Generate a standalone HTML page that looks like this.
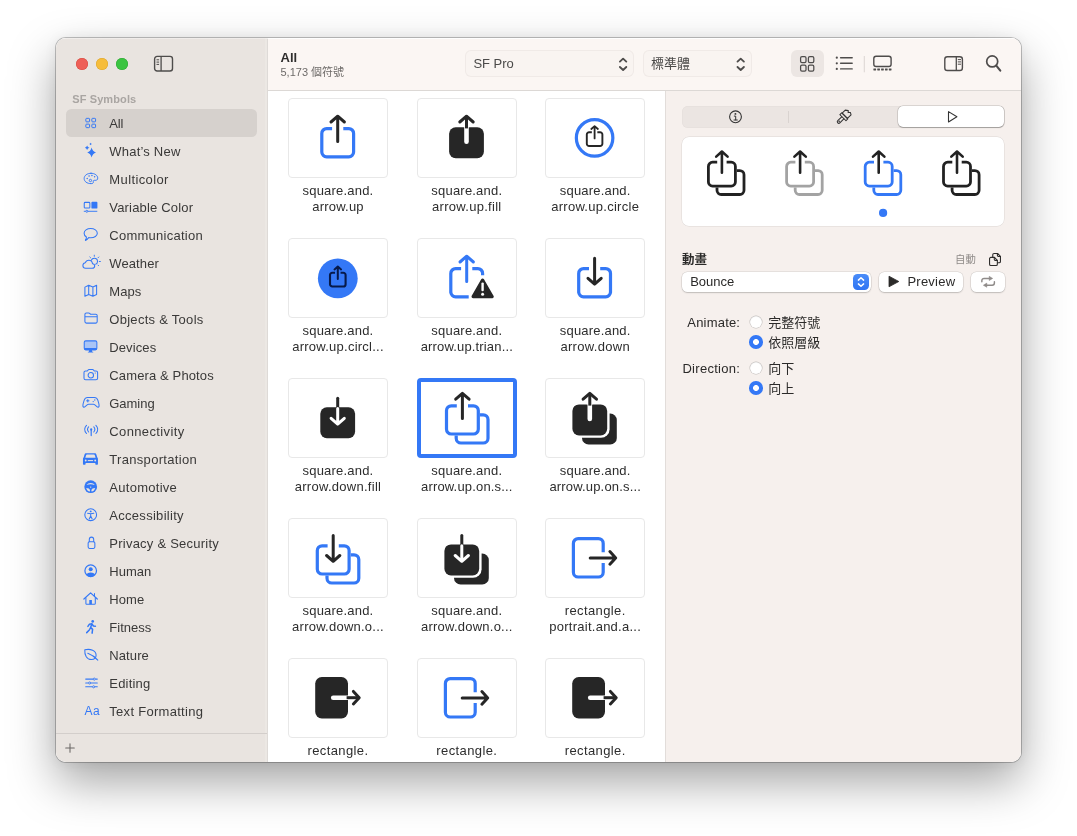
<!DOCTYPE html>
<html lang="zh-Hant">
<head>
<meta charset="utf-8">
<title>SF Symbols</title>
<style>
*{box-sizing:border-box;margin:0;padding:0}
html,body{width:1077px;height:836px;overflow:hidden;background:#fff}
body{font-family:"Liberation Sans","Noto Sans CJK TC",sans-serif;font-size:13px;color:#2b2b2b;position:relative}
.abs{position:absolute}
.win{will-change:transform}
svg{overflow:visible}
.shadow{position:absolute;left:56px;top:38px;width:965px;height:724px;border-radius:10px;
 box-shadow:0 0 0 1px rgba(0,0,0,.23),0 20px 47px rgba(0,0,0,.36),0 0 14px rgba(0,0,0,.06)}
.win{position:absolute;left:56px;top:38px;width:965px;height:724px;border-radius:10px;overflow:hidden;background:#fff}
.sidebar{position:absolute;left:0;top:0;width:212px;height:724px;background:#e9e4e0}
.sidebar .edge{position:absolute;right:0;top:0;width:3.3px;height:100%;background:#ece8e4;border-right:1px solid #dedad7}
.tl{position:absolute;top:20px;width:12px;height:12px;border-radius:50%}
.sec{position:absolute;left:16.3px;top:53.6px;font-size:11px;font-weight:bold;color:#a9a5a2;line-height:14px;letter-spacing:.1px}
.selrow{position:absolute;left:10px;top:71px;width:191px;height:28px;border-radius:5.5px;background:#d6d1cd}
.sfoot{position:absolute;left:0;top:695px;width:211px;height:1px;background:#d3cecb}
.toolbar{position:absolute;left:212px;top:0;width:753px;height:52.6px;background:#fbf6f3;border-bottom:1px solid #dcd8d5}
.hl{position:absolute;left:0;top:0;width:965px;height:1px;background:linear-gradient(90deg,rgba(255,255,255,.35) 0 211px,rgba(255,255,255,.9) 212px)}
.card{position:absolute;width:100px;height:80px;border:1px solid #e8e8e8;border-radius:4px;background:#fff}
.sel-card{border:4px solid #3478f6;border-radius:4px}
.lbl{position:absolute;width:128px;text-align:center;font-size:13px;line-height:16px;color:#2d2d2d;letter-spacing:.24px;white-space:nowrap}
.popup{border-radius:6px;background:#f9f4f1;box-shadow:inset 0 0 0 1px #f0eae7}
.grid{position:absolute;left:211px;top:52px;width:398px;height:672px}
</style>
</head>
<body>
<div class="shadow"></div>
<div class="win">
  <div class="sidebar">
    <div class="edge"></div>
    <div class="tl" style="left:20px;background:#ee5f57;box-shadow:inset 0 0 0 .5px #d5493f"></div>
    <div class="tl" style="left:40px;background:#f6bd3b;box-shadow:inset 0 0 0 .5px #dba42c"></div>
    <div class="tl" style="left:60px;background:#3bc441;box-shadow:inset 0 0 0 .5px #2ea533"></div>
    <div class="sec">SF Symbols</div>
    <div class="selrow"></div>
    <div class="sfoot"></div>
  </div>
  <div class="toolbar"></div>
<div class="abs" style="left:53.3px;top:78.0px;font-size:13px;line-height:16px;color:#3a3938;font-weight:normal;white-space:nowrap;letter-spacing:-0.14px">All</div>
<svg class="abs" style="left:25.2px;top:75.0px" width="20" height="20" viewBox="0 0 20 20"><rect x="4.85" y="5.35" width="3.7" height="3.5" rx="0.75" fill="none" stroke="#3478f6" stroke-width="1.0"/><rect x="4.85" y="11.15" width="3.7" height="3.5" rx="0.75" fill="none" stroke="#3478f6" stroke-width="1.0"/><rect x="10.85" y="5.35" width="3.7" height="3.5" rx="0.75" fill="none" stroke="#3478f6" stroke-width="1.0"/><rect x="10.85" y="11.15" width="3.7" height="3.5" rx="0.75" fill="none" stroke="#3478f6" stroke-width="1.0"/></svg>
<div class="abs" style="left:53.3px;top:106.0px;font-size:13px;line-height:16px;color:#3a3938;font-weight:normal;white-space:nowrap;letter-spacing:0.21px">What’s New</div>
<svg class="abs" style="left:25.2px;top:103.0px" width="20" height="20" viewBox="0 0 20 20"><path d="M10.6 6.6Q11.568 10.422 15.0 11.5Q11.568 12.578 10.6 16.4Q9.632 12.578 6.199999999999999 11.5Q9.632 10.422 10.6 6.6Z" fill="#3478f6" /><path d="M6.1 4.4Q6.675 6.125 8.399999999999999 6.7Q6.675 7.275 6.1 9.0Q5.5249999999999995 7.275 3.8 6.7Q5.5249999999999995 6.125 6.1 4.4Z" fill="#3478f6" /><path d="M9.6 1.7Q9.99 2.61 10.9 3.0Q9.99 3.39 9.6 4.3Q9.209999999999999 3.39 8.299999999999999 3.0Q9.209999999999999 2.61 9.6 1.7Z" fill="#3478f6" /></svg>
<div class="abs" style="left:53.3px;top:134.0px;font-size:13px;line-height:16px;color:#3a3938;font-weight:normal;white-space:nowrap;letter-spacing:0.39px">Multicolor</div>
<svg class="abs" style="left:25.2px;top:131.0px" width="20" height="20" viewBox="0 0 20 20"><g transform="translate(10 9.5) scale(.95) translate(-10.2 -9.5)"><path d="M10.2 4C14.4 4 17.3 6.4 17.3 9.1C17.3 11.2 15.6 11.6 14.2 11.4C13 11.2 12.3 12 12.6 13C12.9 14 12.3 14.9 10.4 14.9C5.9 14.9 3 12.6 3 9.5C3 6.4 6 4 10.2 4Z" fill="none" stroke="#3478f6" stroke-width="1.05" stroke-linecap="round" stroke-linejoin="round" /><circle cx="6.2" cy="9.4" r="0.8" fill="#3478f6"/><circle cx="8.2" cy="6.9" r="0.8" fill="#3478f6"/><circle cx="11.2" cy="6.4" r="0.8" fill="#3478f6"/><circle cx="14" cy="7.6" r="0.8" fill="#3478f6"/><circle cx="9.6" cy="11.6" r="1.25" fill="none" stroke="#3478f6" stroke-width="1.0"/></g></svg>
<div class="abs" style="left:53.3px;top:162.0px;font-size:13px;line-height:16px;color:#3a3938;font-weight:normal;white-space:nowrap;letter-spacing:0.18px">Variable Color</div>
<svg class="abs" style="left:25.2px;top:159.0px" width="20" height="20" viewBox="0 0 20 20"><rect x="3.25" y="5.35" width="5.6" height="5.7" rx="0.9" fill="none" stroke="#3478f6" stroke-width="1.05"/><rect x="10.4" y="4.8" width="6.0" height="6.8" rx="0.9" fill="#3478f6" /><path d="M3.2 14.3H15.9" fill="none" stroke="#3478f6" stroke-width="0.95" stroke-linecap="round" stroke-linejoin="round" /><circle cx="5.8" cy="14.3" r="1.15" fill="#e9e4e0"/><circle cx="5.8" cy="14.3" r="1.0" fill="none" stroke="#3478f6" stroke-width="0.9"/></svg>
<div class="abs" style="left:53.3px;top:190.0px;font-size:13px;line-height:16px;color:#3a3938;font-weight:normal;white-space:nowrap;letter-spacing:0.25px">Communication</div>
<svg class="abs" style="left:25.2px;top:187.0px" width="20" height="20" viewBox="0 0 20 20"><path d="M9.7 3.5C13.4 3.5 16.3 5.6 16.3 8.2C16.3 10.8 13.4 12.8 9.7 12.8C9 12.8 8.3 12.7 7.7 12.6C6.9 13.6 5.7 14.9 4.4 15.4C4.9 14.5 5.5 13.2 5.4 12C4 11.1 3.1 9.7 3.1 8.2C3.1 5.6 6 3.5 9.7 3.5Z" fill="none" stroke="#3478f6" stroke-width="1.05" stroke-linecap="round" stroke-linejoin="round" /></svg>
<div class="abs" style="left:53.3px;top:218.0px;font-size:13px;line-height:16px;color:#3a3938;font-weight:normal;white-space:nowrap;letter-spacing:0.11px">Weather</div>
<svg class="abs" style="left:25.2px;top:215.0px" width="20" height="20" viewBox="0 0 20 20"><path d="M4.6 15.3H11.2C12.6 15.3 13.7 14.3 13.7 13C13.7 11.7 12.7 10.8 11.5 10.7C11.3 8.6 9.7 7.2 7.8 7.2C6.2 7.2 4.9 8.2 4.4 9.7C2.9 9.8 1.9 11 1.9 12.5C1.9 14.1 3.1 15.3 4.6 15.3Z" fill="none" stroke="#3478f6" stroke-width="1.05" stroke-linecap="round" stroke-linejoin="round" /><path d="M10.3 7.3C10.8 6 12 5.3 13.3 5.3C15.1 5.3 16.5 6.7 16.5 8.5C16.5 9.8 15.8 10.8 14.7 11.3" fill="none" stroke="#3478f6" stroke-width="1.05" stroke-linecap="round" stroke-linejoin="round" /><path d="M13.3 2.2V3.3M17.8 4L17 4.8M19.4 8.5H18.3M8.8 4L9.6 4.8M17.6 12.7L17 12.1" fill="none" stroke="#3478f6" stroke-width="0.95" stroke-linecap="round" stroke-linejoin="round" /></svg>
<div class="abs" style="left:53.3px;top:246.0px;font-size:13px;line-height:16px;color:#3a3938;font-weight:normal;white-space:nowrap;letter-spacing:0.03px">Maps</div>
<svg class="abs" style="left:25.2px;top:243.0px" width="20" height="20" viewBox="0 0 20 20"><path d="M3.9 6.1L7.7 4.2L11.9 6L15.6 4.2V13.6L11.9 15.2L7.7 13.5L3.9 15.2ZM7.7 4.2V13.5M11.9 6V15.2" fill="none" stroke="#3478f6" stroke-width="1.05" stroke-linecap="round" stroke-linejoin="round" /></svg>
<div class="abs" style="left:53.3px;top:274.0px;font-size:13px;line-height:16px;color:#3a3938;font-weight:normal;white-space:nowrap;letter-spacing:0.28px">Objects &amp; Tools</div>
<svg class="abs" style="left:25.2px;top:271.0px" width="20" height="20" viewBox="0 0 20 20"><path d="M3.9 5.4A1.5 1.5 0 0 1 5.4 3.9H7.6C8.3 3.9 8.6 4.2 9 4.7L9.5 5.3H14.7A1.5 1.5 0 0 1 16.2 6.8V12.6A1.5 1.5 0 0 1 14.7 14.1H5.4A1.5 1.5 0 0 1 3.9 12.6ZM3.9 7.7H16.2" fill="none" stroke="#3478f6" stroke-width="1.05" stroke-linecap="round" stroke-linejoin="round" /></svg>
<div class="abs" style="left:53.3px;top:302.0px;font-size:13px;line-height:16px;color:#3a3938;font-weight:normal;white-space:nowrap;letter-spacing:0.1px">Devices</div>
<svg class="abs" style="left:25.2px;top:299.0px" width="20" height="20" viewBox="0 0 20 20"><rect x="3.25" y="3.85" width="12.6" height="9.0" rx="1.5" fill="#a9c4f6" stroke="#3478f6" stroke-width="1.05"/><path d="M3.25 10.9H15.85V11.6A1.5 1.5 0 0 1 14.35 13.1H4.75A1.5 1.5 0 0 1 3.25 11.6Z" fill="#3478f6" /><path d="M8.2 13H10.9L11.2 14.7H12.2V15.5H6.9V14.7H7.9Z" fill="#3478f6" /></svg>
<div class="abs" style="left:53.3px;top:330.0px;font-size:13px;line-height:16px;color:#3a3938;font-weight:normal;white-space:nowrap;letter-spacing:0.13px">Camera &amp; Photos</div>
<svg class="abs" style="left:25.2px;top:327.0px" width="20" height="20" viewBox="0 0 20 20"><path d="M4.6 6H6.3L7.2 4.9C7.4 4.6 7.7 4.5 8 4.5H11.6C11.9 4.5 12.2 4.6 12.4 4.9L13.3 6H15A1.6 1.6 0 0 1 16.6 7.6V13.2A1.6 1.6 0 0 1 15 14.8H4.6A1.6 1.6 0 0 1 3 13.2V7.6A1.6 1.6 0 0 1 4.6 6Z" fill="none" stroke="#3478f6" stroke-width="1.05" stroke-linecap="round" stroke-linejoin="round" /><circle cx="9.8" cy="10.2" r="2.7" fill="none" stroke="#3478f6" stroke-width="1.05"/><circle cx="14.3" cy="8" r="0.6" fill="#3478f6"/></svg>
<div class="abs" style="left:53.3px;top:358.0px;font-size:13px;line-height:16px;color:#3a3938;font-weight:normal;white-space:nowrap;letter-spacing:-0.04px">Gaming</div>
<svg class="abs" style="left:25.2px;top:355.0px" width="20" height="20" viewBox="0 0 20 20"><path d="M6.6 4.4H13.4C15.2 4.4 16.2 5.4 16.8 7.2C17.5 9.3 18.2 11.6 18.1 12.9C18 14 17.2 14.4 16.5 14.1C15.7 13.8 14.6 12.4 13.6 11.6C13.2 11.3 12.8 11.2 12.3 11.2H7.7C7.2 11.2 6.8 11.3 6.4 11.6C5.4 12.4 4.3 13.8 3.5 14.1C2.8 14.4 2 14 1.9 12.9C1.8 11.6 2.5 9.3 3.2 7.2C3.8 5.4 4.8 4.4 6.6 4.4Z" fill="none" stroke="#3478f6" stroke-width="1.05" stroke-linecap="round" stroke-linejoin="round" /><path d="M5.6 7.8H8M6.8 6.6V9" fill="none" stroke="#3478f6" stroke-width="1.0" stroke-linecap="round" stroke-linejoin="round" /><circle cx="12.2" cy="8.6" r="0.65" fill="#3478f6"/><circle cx="13.8" cy="7.0" r="0.65" fill="#3478f6"/></svg>
<div class="abs" style="left:53.3px;top:386.0px;font-size:13px;line-height:16px;color:#3a3938;font-weight:normal;white-space:nowrap;letter-spacing:0.37px">Connectivity</div>
<svg class="abs" style="left:25.2px;top:383.0px" width="20" height="20" viewBox="0 0 20 20"><path d="M10.2 9.2V14.6" fill="none" stroke="#3478f6" stroke-width="1.2" stroke-linecap="round" stroke-linejoin="round" /><circle cx="10.2" cy="8.4" r="1.1" fill="#3478f6"/><path d="M7.6 5.9C6.4 7.3 6.4 9.6 7.6 11M12.8 5.9C14 7.3 14 9.6 12.8 11" fill="none" stroke="#3478f6" stroke-width="1.05" stroke-linecap="round" stroke-linejoin="round" /><path d="M5.5 4.4C3.3 6.8 3.3 10.1 5.5 12.5M14.9 4.4C17.1 6.8 17.1 10.1 14.9 12.5" fill="none" stroke="#3478f6" stroke-width="1.05" stroke-linecap="round" stroke-linejoin="round" /></svg>
<div class="abs" style="left:53.3px;top:414.0px;font-size:13px;line-height:16px;color:#3a3938;font-weight:normal;white-space:nowrap;letter-spacing:0.31px">Transportation</div>
<svg class="abs" style="left:25.2px;top:411.0px" width="20" height="20" viewBox="0 0 20 20"><path d="M5.2 4.3H13.9C14.8 4.3 15.3 4.8 15.6 5.6L16.4 8.2C17 8.6 17.2 9.2 17.2 10V15A.7 .7 0 0 1 16.5 15.7H15.2A.7 .7 0 0 1 14.5 15V13.9H4.6V15A.7 .7 0 0 1 3.9 15.7H2.6A.7 .7 0 0 1 1.9 15V10C1.9 9.2 2.1 8.6 2.7 8.2L3.5 5.6C3.8 4.8 4.3 4.3 5.2 4.3Z" fill="#3478f6" transform="translate(.1 0) scale(.98 1)"/><path d="M4.3 8.8L5.1 6.2C5.2 5.8 5.5 5.6 5.9 5.6H13C13.4 5.6 13.7 5.8 13.8 6.2L14.6 8.8Z" fill="#e9e4e0"/><circle cx="4.7" cy="11.5" r="0.9" fill="#e9e4e0"/><circle cx="14.2" cy="11.5" r="0.9" fill="#e9e4e0"/><path d="M7.2 11.6H11.7" stroke="#e9e4e0" stroke-width="1" stroke-linecap="round"/></svg>
<div class="abs" style="left:53.3px;top:442.0px;font-size:13px;line-height:16px;color:#3a3938;font-weight:normal;white-space:nowrap;letter-spacing:0.28px">Automotive</div>
<svg class="abs" style="left:25.2px;top:439.0px" width="20" height="20" viewBox="0 0 20 20"><circle cx="9.7" cy="9.7" r="6.4" fill="#3478f6"/><path d="M5.5 8.1C6.4 6.7 7.9 5.9 9.7 5.9C11.5 5.9 13 6.7 13.9 8.1C12.6 7.5 11.2 7.2 9.7 7.2C8.2 7.2 6.8 7.5 5.5 8.1Z" fill="#e9e4e0"/><path d="M5.2 10.9L7.9 11.4C8.1 12 8.5 12.4 9 12.7L8.9 14.6C7 14.3 5.6 12.8 5.2 10.9Z" fill="#e9e4e0"/><path d="M14.2 10.9L11.5 11.4C11.3 12 10.9 12.4 10.4 12.7L10.5 14.6C12.4 14.3 13.8 12.8 14.2 10.9Z" fill="#e9e4e0"/><circle cx="9.7" cy="10.1" r="0.7" fill="#e9e4e0"/></svg>
<div class="abs" style="left:53.3px;top:470.0px;font-size:13px;line-height:16px;color:#3a3938;font-weight:normal;white-space:nowrap;letter-spacing:0.29px">Accessibility</div>
<svg class="abs" style="left:25.2px;top:467.0px" width="20" height="20" viewBox="0 0 20 20"><circle cx="9.7" cy="9.7" r="5.9" fill="none" stroke="#3478f6" stroke-width="1.05"/><circle cx="9.7" cy="6.4" r="0.95" fill="#3478f6"/><path d="M6.6 8.3C8.6 8.8 10.8 8.8 12.8 8.3M9.7 8.8V11M9.7 11L8.2 13.9M9.7 11L11.2 13.9" fill="none" stroke="#3478f6" stroke-width="1.05" stroke-linecap="round" stroke-linejoin="round" /></svg>
<div class="abs" style="left:53.3px;top:498.0px;font-size:13px;line-height:16px;color:#3a3938;font-weight:normal;white-space:nowrap;letter-spacing:0.24px">Privacy &amp; Security</div>
<svg class="abs" style="left:25.2px;top:495.0px" width="20" height="20" viewBox="0 0 20 20"><rect x="7.15" y="8.7" width="6.7" height="6.7" rx="1.3" fill="none" stroke="#3478f6" stroke-width="1.05"/><path d="M8.3 8.6V6.5C8.3 5 9.3 4.1 10.5 4.1C11.7 4.1 12.7 5 12.7 6.5V8.6" fill="none" stroke="#3478f6" stroke-width="1.05" stroke-linecap="round" stroke-linejoin="round" /></svg>
<div class="abs" style="left:53.3px;top:526.0px;font-size:13px;line-height:16px;color:#3a3938;font-weight:normal;white-space:nowrap;letter-spacing:-0.0px">Human</div>
<svg class="abs" style="left:25.2px;top:523.0px" width="20" height="20" viewBox="0 0 20 20"><circle cx="9.7" cy="9.7" r="5.8" fill="none" stroke="#3478f6" stroke-width="1.25"/><circle cx="9.7" cy="8.3" r="2.0" fill="#3478f6"/><path d="M5.3 13.7C6.2 12.2 7.8 11.5 9.7 11.5C11.6 11.5 13.2 12.2 14.1 13.7C13 15 11.4 15.7 9.7 15.7C8 15.7 6.4 15 5.3 13.7Z" fill="#3478f6" /></svg>
<div class="abs" style="left:53.3px;top:554.0px;font-size:13px;line-height:16px;color:#3a3938;font-weight:normal;white-space:nowrap;letter-spacing:0.06px">Home</div>
<svg class="abs" style="left:25.2px;top:551.0px" width="20" height="20" viewBox="0 0 20 20"><path d="M2.9 10L9.6 3.9L16.3 10" fill="none" stroke="#3478f6" stroke-width="1.2" stroke-linecap="round" stroke-linejoin="round" /><path d="M4.9 8.7V14.4A.9 .9 0 0 0 5.8 15.3H13.4A.9 .9 0 0 0 14.3 14.4V8.7M13.5 4.6V7" fill="none" stroke="#3478f6" stroke-width="1.05" stroke-linecap="round" stroke-linejoin="round" /><path d="M8.3 10.9H10.9V15.3H8.3Z" fill="#3478f6" /></svg>
<div class="abs" style="left:53.3px;top:582.0px;font-size:13px;line-height:16px;color:#3a3938;font-weight:normal;white-space:nowrap;letter-spacing:-0.0px">Fitness</div>
<svg class="abs" style="left:25.2px;top:579.0px" width="20" height="20" viewBox="0 0 20 20"><circle cx="11.7" cy="4.4" r="1.35" fill="#3478f6"/><path d="M10.9 6.8L8.3 7.3L6.9 9.4M10.9 6.8L9.6 10.4L11.6 12.4L11.1 16.2M10.9 6.8L12.4 9L14.4 9.2M9.6 10.6L8.3 13L5.7 15.6" fill="none" stroke="#3478f6" stroke-width="1.5" stroke-linecap="round" stroke-linejoin="round" /></svg>
<div class="abs" style="left:53.3px;top:610.0px;font-size:13px;line-height:16px;color:#3a3938;font-weight:normal;white-space:nowrap;letter-spacing:0.1px">Nature</div>
<svg class="abs" style="left:25.2px;top:607.0px" width="20" height="20" viewBox="0 0 20 20"><path d="M3.8 4.8C9.5 3.4 15.1 5.6 15.1 10.3C15.1 13 12.9 14.5 10.3 14.5C5.8 14.5 3.4 10.2 3.8 4.8Z" fill="none" stroke="#3478f6" stroke-width="1.05" stroke-linecap="round" stroke-linejoin="round" /><path d="M6.8 8.3C10.4 9.6 14 12 16.8 15.2" fill="none" stroke="#3478f6" stroke-width="1.05" stroke-linecap="round" stroke-linejoin="round" /></svg>
<div class="abs" style="left:53.3px;top:638.0px;font-size:13px;line-height:16px;color:#3a3938;font-weight:normal;white-space:nowrap;letter-spacing:0.18px">Editing</div>
<svg class="abs" style="left:25.2px;top:635.0px" width="20" height="20" viewBox="0 0 20 20"><path d="M4.7 6.1H16.3M4.7 10H16.3M4.7 13.8H16.3" fill="none" stroke="#3478f6" stroke-width="1.05" stroke-linecap="round" stroke-linejoin="round" /><circle cx="13.3" cy="6.1" r="1.3" fill="#e9e4e0"/><circle cx="13.3" cy="6.1" r="1.05" fill="none" stroke="#3478f6" stroke-width="0.9"/><circle cx="8.6" cy="10" r="1.3" fill="#e9e4e0"/><circle cx="8.6" cy="10" r="1.05" fill="none" stroke="#3478f6" stroke-width="0.9"/><circle cx="12.6" cy="13.8" r="1.3" fill="#e9e4e0"/><circle cx="12.6" cy="13.8" r="1.05" fill="none" stroke="#3478f6" stroke-width="0.9"/></svg>
<div class="abs" style="left:53.3px;top:666.0px;font-size:13px;line-height:16px;color:#3a3938;font-weight:normal;white-space:nowrap;letter-spacing:0.29px">Text Formatting</div>
<div class="abs" style="left:28.6px;top:665.0px;font-size:12px;line-height:16px;color:#3478f6;letter-spacing:.3px;white-space:nowrap">Aa</div>
<svg class="abs" style="left:8.2px;top:703.7px;" width="12" height="12" viewBox="0 0 12 12"><path d="M6 1.7V10.3M1.7 6H10.3" stroke="#6a6765" stroke-width="1.05" stroke-linecap="round"/></svg>
<div class="abs" style="left:224.5px;top:12.2px;font-size:13px;line-height:16px;color:#2f2e2d;font-weight:bold;white-space:nowrap;">All</div>
<div class="abs" style="left:224.5px;top:27.3px;font-size:11px;line-height:14px;color:#6e6b69;font-weight:normal;white-space:nowrap;">5,173 個符號</div>
<div class="abs popup" style="left:409.0px;top:12.4px;width:169.0px;height:26.8px;"></div>
<div class="abs" style="left:417.4px;top:17.6px;font-size:13px;line-height:16px;color:#4b4a49;font-weight:normal;white-space:nowrap;">SF Pro</div>
<div class="abs popup" style="left:587.0px;top:12.4px;width:109.0px;height:26.8px;"></div>
<div class="abs" style="left:595.0px;top:17.6px;font-size:13px;line-height:16px;color:#4b4a49;font-weight:normal;white-space:nowrap;">標準體</div>
<svg class="abs" style="left:554.0px;top:12.0px;" width="140" height="27" viewBox="0 0 140 27"><path d="M9.899999999999999 11.600000000000001L13.1 8.600000000000001L16.3 11.600000000000001M9.899999999999999 17.0L13.1 20.0L16.3 17.0" fill="none" stroke="#4e4c4b" stroke-width="1.85" stroke-linecap="round" stroke-linejoin="round"/><path d="M127.49999999999999 11.600000000000001L130.7 8.600000000000001L133.89999999999998 11.600000000000001M127.49999999999999 17.0L130.7 20.0L133.89999999999998 17.0" fill="none" stroke="#4e4c4b" stroke-width="1.85" stroke-linecap="round" stroke-linejoin="round"/></svg>
<div class="abs " style="left:735.0px;top:12.0px;width:33.0px;height:27.0px;border-radius:6px;background:#ece6e3"></div>
<svg class="abs" style="left:724.0px;top:2.0px;" width="240" height="50" viewBox="0 0 240 50"><rect x="20.600000000000023" y="16.6" width="5.4" height="6" rx="1.4" fill="none" stroke="#4e4c4b" stroke-width="1.25"/><rect x="28.399999999999977" y="16.6" width="5.4" height="6" rx="1.4" fill="none" stroke="#4e4c4b" stroke-width="1.25"/><rect x="20.600000000000023" y="25.099999999999994" width="5.4" height="6" rx="1.4" fill="none" stroke="#4e4c4b" stroke-width="1.25"/><rect x="28.399999999999977" y="25.099999999999994" width="5.4" height="6" rx="1.4" fill="none" stroke="#4e4c4b" stroke-width="1.25"/><circle cx="56.799999999999955" cy="17.700000000000003" r="1.1" fill="#4e4c4b"/><path d="M60.60000000000002 17.700000000000003H72.20000000000005" stroke="#4e4c4b" stroke-width="1.4" stroke-linecap="round"/><circle cx="56.799999999999955" cy="23.300000000000004" r="1.1" fill="#4e4c4b"/><path d="M60.60000000000002 23.300000000000004H72.20000000000005" stroke="#4e4c4b" stroke-width="1.4" stroke-linecap="round"/><circle cx="56.799999999999955" cy="28.900000000000006" r="1.1" fill="#4e4c4b"/><path d="M60.60000000000002 28.900000000000006H72.20000000000005" stroke="#4e4c4b" stroke-width="1.4" stroke-linecap="round"/><path d="M84.29999999999995 16V32.3" stroke="#dcd6d3" stroke-width="1"/><rect x="93.79999999999995" y="16.299999999999997" width="17.3" height="10.2" rx="2.3" fill="none" stroke="#4e4c4b" stroke-width="1.4"/><rect x="93.39999999999998" y="28.400000000000006" width="2.7" height="2.1" rx=".4" fill="#4e4c4b"/><rect x="97.24999999999997" y="28.400000000000006" width="2.7" height="2.1" rx=".4" fill="#4e4c4b"/><rect x="101.09999999999998" y="28.400000000000006" width="2.7" height="2.1" rx=".4" fill="#4e4c4b"/><rect x="104.94999999999997" y="28.400000000000006" width="2.7" height="2.1" rx=".4" fill="#4e4c4b"/><rect x="108.79999999999998" y="28.400000000000006" width="2.7" height="2.1" rx=".4" fill="#4e4c4b"/><rect x="164.79999999999995" y="16.700000000000003" width="17.6" height="13.8" rx="2.6" fill="none" stroke="#4e4c4b" stroke-width="1.4"/><path d="M176.29999999999995 16.7V30.5" stroke="#4e4c4b" stroke-width="1.3"/><path d="M178.20000000000005 19.6H180.60000000000002" stroke="#4e4c4b" stroke-width="1" stroke-linecap="round"/><path d="M178.20000000000005 21.900000000000002H180.60000000000002" stroke="#4e4c4b" stroke-width="1" stroke-linecap="round"/><path d="M178.20000000000005 24.200000000000003H180.60000000000002" stroke="#4e4c4b" stroke-width="1" stroke-linecap="round"/><circle cx="212.20000000000005" cy="21.4" r="5.5" fill="none" stroke="#4e4c4b" stroke-width="1.7"/><path d="M216.29999999999995 25.599999999999994L220.29999999999995 30.599999999999994" stroke="#4e4c4b" stroke-width="2.1" stroke-linecap="round"/></svg>
<svg class="abs" style="left:97.0px;top:17.3px;" width="22" height="18" viewBox="0 0 22 18"><rect x="1.6" y="1.4" width="17.9" height="14.6" rx="2.5" fill="none" stroke="#4e4c4b" stroke-width="1.4"/><path d="M8.1 1.4V16" stroke="#4e4c4b" stroke-width="1.3"/><path d="M3.9 4.8H5.7" stroke="#4e4c4b" stroke-width="1" stroke-linecap="round"/><path d="M3.9 7.1H5.7" stroke="#4e4c4b" stroke-width="1" stroke-linecap="round"/><path d="M3.9 9.399999999999999H5.7" stroke="#4e4c4b" stroke-width="1" stroke-linecap="round"/></svg>
  <div class="grid">
<div class="card" style="left:21px;top:8px"></div>
<svg class="abs" style="left:21.0px;top:8px" width="100" height="80" viewBox="0 0 100 80"><g transform="translate(49.7 29)"><path d="M-5.60 1.60H-11.10A4.8 4.8 0 0 0 -15.90 6.40V25.00A4.8 4.8 0 0 0 -11.10 29.80H11.10A4.8 4.8 0 0 0 15.90 25.00V6.40A4.8 4.8 0 0 0 11.10 1.60H5.60" fill="none" stroke="#3478f6" stroke-width="3.2" stroke-linecap="butt" stroke-linejoin="round" /><path d="M0 14.4V-10.6M-6.7 -5L0 -10.8L6.7 -5" fill="none" stroke="#262626" stroke-width="3" stroke-linecap="round" stroke-linejoin="round" /></g></svg>
<div class="lbl" style="left:7.0px;top:93px"><span style="letter-spacing:0.2px">square.and.</span><br><span style="letter-spacing:0.22px">arrow.up</span></div>
<div class="card" style="left:150px;top:8px"></div>
<svg class="abs" style="left:149.8px;top:8px" width="100" height="80" viewBox="0 0 100 80"><g transform="translate(49.5 29)"><rect x="-17.4" y="0.2" width="34.8" height="31" rx="6.6" fill="#262626"/><path d="M0 -1V14.8" fill="none" stroke="#fff" stroke-width="4.6" stroke-linecap="round" stroke-linejoin="round" /><rect x="-3" y="-4" width="6" height="4.1" fill="#fff"/><path d="M0 1.4V-10.6" fill="none" stroke="#262626" stroke-width="3" stroke-linecap="butt" stroke-linejoin="round" /><path d="M-6.7 -5L0 -10.8L6.7 -5" fill="none" stroke="#262626" stroke-width="3" stroke-linecap="round" stroke-linejoin="round" /></g></svg>
<div class="lbl" style="left:135.8px;top:93px"><span style="letter-spacing:0.2px">square.and.</span><br><span style="letter-spacing:0.28px">arrow.up.fill</span></div>
<div class="card" style="left:278px;top:8px"></div>
<svg class="abs" style="left:278.2px;top:8px" width="100" height="80" viewBox="0 0 100 80"><g transform="translate(49.6 39.9)"><circle cx="0" cy="0" r="18.25" fill="none" stroke="#3478f6" stroke-width="3.2"/><g transform="translate(0 -6.5) scale(0.49)"><path d="M-5.60 1.60H-11.10A4.8 4.8 0 0 0 -15.90 6.40V25.00A4.8 4.8 0 0 0 -11.10 29.80H11.10A4.8 4.8 0 0 0 15.90 25.00V6.40A4.8 4.8 0 0 0 11.10 1.60H5.60" fill="none" stroke="#262626" stroke-width="3.9" stroke-linecap="butt" stroke-linejoin="round" /><path d="M0 14.4V-10.6M-6.7 -5L0 -10.8L6.7 -5" fill="none" stroke="#262626" stroke-width="3.7" stroke-linecap="round" stroke-linejoin="round" /></g></g></svg>
<div class="lbl" style="left:264.2px;top:93px"><span style="letter-spacing:0.2px">square.and.</span><br><span style="letter-spacing:0.28px">arrow.up.circle</span></div>
<div class="card" style="left:21px;top:148px"></div>
<svg class="abs" style="left:21.0px;top:148px" width="100" height="80" viewBox="0 0 100 80"><g transform="translate(49.8 40.4)"><circle cx="0" cy="0" r="19.9" fill="#3478f6"/><g transform="translate(0 -6.5) scale(0.49)"><path d="M-5.60 1.60H-11.10A4.8 4.8 0 0 0 -15.90 6.40V25.00A4.8 4.8 0 0 0 -11.10 29.80H11.10A4.8 4.8 0 0 0 15.90 25.00V6.40A4.8 4.8 0 0 0 11.10 1.60H5.60" fill="none" stroke="#071a4a" stroke-width="4.3" stroke-linecap="butt" stroke-linejoin="round" /><path d="M0 14.4V-10.6M-6.7 -5L0 -10.8L6.7 -5" fill="none" stroke="#071a4a" stroke-width="4.1" stroke-linecap="round" stroke-linejoin="round" /></g></g></svg>
<div class="lbl" style="left:7.0px;top:233px"><span style="letter-spacing:0.2px">square.and.</span><br><span style="letter-spacing:0.25px">arrow.up.circl...</span></div>
<div class="card" style="left:150px;top:148px"></div>
<svg class="abs" style="left:149.8px;top:148px" width="100" height="80" viewBox="0 0 100 80"><g transform="translate(49.7 29)"><path d="M-5.6 1.6H-11.100000000000001A4.8 4.8 0 0 0 -15.9 6.4V24.999999999999996A4.8 4.8 0 0 0 -11.100000000000001 29.799999999999997H2M5.6 1.6H11.100000000000001A4.8 4.8 0 0 1 15.9 6.4V8.2" fill="none" stroke="#3478f6" stroke-width="3.2" stroke-linecap="butt" stroke-linejoin="round" /><path d="M0 14.4V-10.6M-6.7 -5L0 -10.8L6.7 -5" fill="none" stroke="#3478f6" stroke-width="3" stroke-linecap="round" stroke-linejoin="round" /><path d="M15.9 13.1L25.4 29.6H6.4Z" fill="#262626" stroke="#262626" stroke-width="3.2" stroke-linejoin="round"/><path d="M15.9 16.6V23" fill="none" stroke="#fff" stroke-width="2.4" stroke-linecap="round" stroke-linejoin="round" /><circle cx="15.9" cy="27.2" r="1.5" fill="#fff"/></g></svg>
<div class="lbl" style="left:135.8px;top:233px"><span style="letter-spacing:0.2px">square.and.</span><br><span style="letter-spacing:0.16px">arrow.up.trian...</span></div>
<div class="card" style="left:278px;top:148px"></div>
<svg class="abs" style="left:278.2px;top:148px" width="100" height="80" viewBox="0 0 100 80"><g transform="translate(49.6 29)"><path d="M-5.60 1.60H-11.10A4.8 4.8 0 0 0 -15.90 6.40V25.00A4.8 4.8 0 0 0 -11.10 29.80H11.10A4.8 4.8 0 0 0 15.90 25.00V6.40A4.8 4.8 0 0 0 11.10 1.60H5.60" fill="none" stroke="#3478f6" stroke-width="3.2" stroke-linecap="butt" stroke-linejoin="round" /><path d="M0 -8.7V16.9M-6.6 11.3L0 17.1L6.6 11.3" fill="none" stroke="#262626" stroke-width="3" stroke-linecap="round" stroke-linejoin="round" /></g></svg>
<div class="lbl" style="left:264.2px;top:233px"><span style="letter-spacing:0.2px">square.and.</span><br><span style="letter-spacing:0.3px">arrow.down</span></div>
<div class="card" style="left:21px;top:288px"></div>
<svg class="abs" style="left:21.0px;top:288px" width="100" height="80" viewBox="0 0 100 80"><g transform="translate(49.7 29)"><rect x="-17.4" y="0.2" width="34.8" height="31" rx="6.6" fill="#262626"/><path d="M0 -8.7V0.5" fill="none" stroke="#262626" stroke-width="3" stroke-linecap="round" stroke-linejoin="round" /><path d="M0 1.6V16.9M-6.6 11.3L0 17.1L6.6 11.3" fill="none" stroke="#fff" stroke-width="3" stroke-linecap="round" stroke-linejoin="round" /></g></svg>
<div class="lbl" style="left:7.0px;top:373px"><span style="letter-spacing:0.2px">square.and.</span><br><span style="letter-spacing:0.28px">arrow.down.fill</span></div>
<div class="card sel-card" style="left:150px;top:288px"></div>
<svg class="abs" style="left:149.8px;top:288px" width="100" height="80" viewBox="0 0 100 80"><g transform="translate(45.4 26.2)"><g transform="translate(9.7 9)"><rect x="-15.9" y="1.6" width="31.8" height="28.2" rx="4.8" fill="none" stroke="#3478f6" stroke-width="3.2"/></g><rect x="-17.5" y="0" width="35" height="31.4" rx="6.4" fill="#fff"/><path d="M-5.60 1.60H-11.10A4.8 4.8 0 0 0 -15.90 6.40V25.00A4.8 4.8 0 0 0 -11.10 29.80H11.10A4.8 4.8 0 0 0 15.90 25.00V6.40A4.8 4.8 0 0 0 11.10 1.60H5.60" fill="none" stroke="#3478f6" stroke-width="3.2" stroke-linecap="butt" stroke-linejoin="round" /><path d="M0 14.4V-10.6M-6.7 -5L0 -10.8L6.7 -5" fill="none" stroke="#262626" stroke-width="3" stroke-linecap="round" stroke-linejoin="round" /></g></svg>
<div class="lbl" style="left:135.8px;top:373px"><span style="letter-spacing:0.2px">square.and.</span><br><span style="letter-spacing:0.17px">arrow.up.on.s...</span></div>
<div class="card" style="left:278px;top:288px"></div>
<svg class="abs" style="left:278.2px;top:288px" width="100" height="80" viewBox="0 0 100 80"><g transform="translate(44.8 26.2)"><g transform="translate(9.6 9.1)"><rect x="-17.4" y="0.2" width="34.8" height="31" rx="6.6" fill="#262626"/></g><rect x="-19.8" y="-2.2" width="39.6" height="35.8" rx="8.6" fill="#fff"/><rect x="-17.4" y="0.2" width="34.8" height="31" rx="6.6" fill="#262626"/><path d="M0 -1V14.8" fill="none" stroke="#fff" stroke-width="4.6" stroke-linecap="round" stroke-linejoin="round" /><rect x="-3" y="-4" width="6" height="4.1" fill="#fff"/><path d="M0 1.4V-10.6" fill="none" stroke="#262626" stroke-width="3" stroke-linecap="butt" stroke-linejoin="round" /><path d="M-6.7 -5L0 -10.8L6.7 -5" fill="none" stroke="#262626" stroke-width="3" stroke-linecap="round" stroke-linejoin="round" /></g></svg>
<div class="lbl" style="left:264.2px;top:373px"><span style="letter-spacing:0.2px">square.and.</span><br><span style="letter-spacing:0.17px">arrow.up.on.s...</span></div>
<div class="card" style="left:21px;top:428px"></div>
<svg class="abs" style="left:21.0px;top:428px" width="100" height="80" viewBox="0 0 100 80"><g transform="translate(45.2 26.2)"><g transform="translate(9.7 9)"><rect x="-15.9" y="1.6" width="31.8" height="28.2" rx="4.8" fill="none" stroke="#3478f6" stroke-width="3.2"/></g><rect x="-17.5" y="0" width="35" height="31.4" rx="6.4" fill="#fff"/><path d="M-5.60 1.60H-11.10A4.8 4.8 0 0 0 -15.90 6.40V25.00A4.8 4.8 0 0 0 -11.10 29.80H11.10A4.8 4.8 0 0 0 15.90 25.00V6.40A4.8 4.8 0 0 0 11.10 1.60H5.60" fill="none" stroke="#3478f6" stroke-width="3.2" stroke-linecap="butt" stroke-linejoin="round" /><path d="M0 -8.7V16.9M-6.6 11.3L0 17.1L6.6 11.3" fill="none" stroke="#262626" stroke-width="3" stroke-linecap="round" stroke-linejoin="round" /></g></svg>
<div class="lbl" style="left:7.0px;top:513px"><span style="letter-spacing:0.2px">square.and.</span><br><span style="letter-spacing:0.24px">arrow.down.o...</span></div>
<div class="card" style="left:150px;top:428px"></div>
<svg class="abs" style="left:149.8px;top:428px" width="100" height="80" viewBox="0 0 100 80"><g transform="translate(44.8 26.2)"><g transform="translate(9.6 9.1)"><rect x="-17.4" y="0.2" width="34.8" height="31" rx="6.6" fill="#262626"/></g><rect x="-19.8" y="-2.2" width="39.6" height="35.8" rx="8.6" fill="#fff"/><rect x="-17.4" y="0.2" width="34.8" height="31" rx="6.6" fill="#262626"/><path d="M0 -8.7V0.5" fill="none" stroke="#262626" stroke-width="3" stroke-linecap="round" stroke-linejoin="round" /><path d="M0 1.6V16.9M-6.6 11.3L0 17.1L6.6 11.3" fill="none" stroke="#fff" stroke-width="3" stroke-linecap="round" stroke-linejoin="round" /></g></svg>
<div class="lbl" style="left:135.8px;top:513px"><span style="letter-spacing:0.2px">square.and.</span><br><span style="letter-spacing:0.24px">arrow.down.o...</span></div>
<div class="card" style="left:278px;top:428px"></div>
<svg class="abs" style="left:278.2px;top:428px" width="100" height="80" viewBox="0 0 100 80"><g transform="translate(26.8 19)"><path d="M31.4 15.2V6.4A4.8 4.8 0 0 0 26.599999999999998 1.6H6.4A4.8 4.8 0 0 0 1.6 6.4V35.2A4.8 4.8 0 0 0 6.4 40.0H26.599999999999998A4.8 4.8 0 0 0 31.4 35.2V26.1" fill="none" stroke="#3478f6" stroke-width="3.2" stroke-linecap="butt" stroke-linejoin="round" /><path d="M18.4 20.9H43.7M38.1 14.6L43.9 20.9L38.1 27.2" fill="none" stroke="#262626" stroke-width="3" stroke-linecap="round" stroke-linejoin="round" /></g></svg>
<div class="lbl" style="left:264.2px;top:513px"><span style="letter-spacing:0.39px">rectangle.</span><br><span style="letter-spacing:0.25px">portrait.and.a...</span></div>
<div class="card" style="left:21px;top:568px"></div>
<svg class="abs" style="left:21.0px;top:568px" width="100" height="80" viewBox="0 0 100 80"><g transform="translate(27 18.8)"><rect x="0.2" y="0.2" width="32.8" height="41.4" rx="6.6" fill="#262626"/><path d="M18.2 20.9H34" fill="none" stroke="#fff" stroke-width="4.6" stroke-linecap="round" stroke-linejoin="round" /><rect x="33" y="17" width="4.2" height="8" fill="#fff"/><path d="M31.6 20.9H44" fill="none" stroke="#262626" stroke-width="3" stroke-linecap="butt" stroke-linejoin="round" /><path d="M38.4 14.6L44.2 20.9L38.4 27.2" fill="none" stroke="#262626" stroke-width="3" stroke-linecap="round" stroke-linejoin="round" /></g></svg>
<div class="lbl" style="left:7.0px;top:653px"><span style="letter-spacing:0.39px">rectangle.</span><br><span style="letter-spacing:0.25px">portrait.and.a...</span></div>
<div class="card" style="left:150px;top:568px"></div>
<svg class="abs" style="left:149.8px;top:568px" width="100" height="80" viewBox="0 0 100 80"><g transform="translate(26.8 19)"><path d="M31.4 15.2V6.4A4.8 4.8 0 0 0 26.599999999999998 1.6H6.4A4.8 4.8 0 0 0 1.6 6.4V35.2A4.8 4.8 0 0 0 6.4 40.0H26.599999999999998A4.8 4.8 0 0 0 31.4 35.2V26.1" fill="none" stroke="#3478f6" stroke-width="3.2" stroke-linecap="butt" stroke-linejoin="round" /><path d="M18.4 20.9H43.7M38.1 14.6L43.9 20.9L38.1 27.2" fill="none" stroke="#262626" stroke-width="3" stroke-linecap="round" stroke-linejoin="round" /></g></svg>
<div class="lbl" style="left:135.8px;top:653px"><span style="letter-spacing:0.39px">rectangle.</span><br><span style="letter-spacing:0.25px">portrait.and.a...</span></div>
<div class="card" style="left:278px;top:568px"></div>
<svg class="abs" style="left:278.2px;top:568px" width="100" height="80" viewBox="0 0 100 80"><g transform="translate(27 18.8)"><rect x="0.2" y="0.2" width="32.8" height="41.4" rx="6.6" fill="#262626"/><path d="M18.2 20.9H34" fill="none" stroke="#fff" stroke-width="4.6" stroke-linecap="round" stroke-linejoin="round" /><rect x="33" y="17" width="4.2" height="8" fill="#fff"/><path d="M31.6 20.9H44" fill="none" stroke="#262626" stroke-width="3" stroke-linecap="butt" stroke-linejoin="round" /><path d="M38.4 14.6L44.2 20.9L38.4 27.2" fill="none" stroke="#262626" stroke-width="3" stroke-linecap="round" stroke-linejoin="round" /></g></svg>
<div class="lbl" style="left:264.2px;top:653px"><span style="letter-spacing:0.39px">rectangle.</span><br><span style="letter-spacing:0.25px">portrait.and.a...</span></div>
  </div>
<div class="abs " style="left:609.0px;top:53.0px;width:356.0px;height:671.0px;background:#f6f0ed"></div>
<div class="abs " style="left:609.0px;top:53.0px;width:1.0px;height:671.0px;background:#e2ddda"></div>
<div class="abs " style="left:626.0px;top:68.0px;width:322.8px;height:21.8px;border-radius:6px;background:#ebe5e2;box-shadow:inset 0 0 0 .5px #e3ddda"></div>
<div class="abs " style="left:841.6px;top:68.4px;width:106.9px;height:20.8px;border-radius:5px;background:#fff;box-shadow:0 0 0 .5px rgba(0,0,0,.20),0 .5px 1px rgba(0,0,0,.22)"></div>
<div class="abs " style="left:732.0px;top:73.0px;width:1.0px;height:12.0px;background:#d9d3d0"></div>
<svg class="abs" style="left:624.0px;top:66.0px;" width="330" height="26" viewBox="0 0 330 26"><circle cx="55.5" cy="12.8" r="5.9" fill="none" stroke="#333" stroke-width="1.1"/><circle cx="55.4" cy="9.9" r=".95" fill="#333"/><path d="M54.3 12.1H55.7V15.9M54 16H57.3" stroke="#333" stroke-width="1" fill="none" stroke-linecap="round"/><g transform="translate(163.2 13.4) rotate(45)" fill="none" stroke="#333" stroke-width="1.05" stroke-linejoin="round" stroke-linecap="round"><path d="M-3.7 -2.2V-6.6L-1.2 -8.4L0 -7L1.6 -8.6L3.7 -7.4V-2.2Z"/><path d="M-4.3 -2.2H4.3V.4H-4.3Z"/><path d="M-1.5 .6V6.2A1.5 1.5 0 0 0 1.5 6.2V.6"/><circle cx="0" cy="5.6" r=".3"/></g><path d="M268.5 7.6L276.9 12.8L268.5 18Z" fill="none" stroke="#333" stroke-width="1.1" stroke-linejoin="round"/></svg>
<div class="abs " style="left:626.0px;top:99.0px;width:322.3px;height:88.5px;border-radius:7px;background:#fff;box-shadow:0 0 0 .5px rgba(0,0,0,.10)"></div>
<svg class="abs" style="left:626.0px;top:99.0px;" width="323" height="89" viewBox="0 0 323 89"><g transform="translate(39.89999999999998 23.80000000000001)"><g transform="translate(8.6 8.4)"><rect x="-13.5" y="1.4" width="27.0" height="23.9" rx="4.2" fill="none" stroke="#222" stroke-width="2.8"/></g><rect x="-14.9" y="0" width="29.8" height="26.7" rx="5.6" fill="#fff"/><path d="M-4.70 1.40H-9.30A4.2 4.2 0 0 0 -13.50 5.60V21.10A4.2 4.2 0 0 0 -9.30 25.30H9.30A4.2 4.2 0 0 0 13.50 21.10V5.60A4.2 4.2 0 0 0 9.30 1.40H4.70" fill="none" stroke="#222" stroke-width="2.8" stroke-linecap="butt" stroke-linejoin="round" /><path d="M0 12V-9.2M-5.7 -4.2L0 -9.3L5.7 -4.2" fill="none" stroke="#222" stroke-width="2.6" stroke-linecap="round" stroke-linejoin="round" /></g><g transform="translate(118.10000000000002 23.80000000000001)"><g transform="translate(8.6 8.4)"><rect x="-13.5" y="1.4" width="27.0" height="23.9" rx="4.2" fill="none" stroke="#a3a3a3" stroke-width="2.8"/></g><rect x="-14.9" y="0" width="29.8" height="26.7" rx="5.6" fill="#fff"/><path d="M-4.70 1.40H-9.30A4.2 4.2 0 0 0 -13.50 5.60V21.10A4.2 4.2 0 0 0 -9.30 25.30H9.30A4.2 4.2 0 0 0 13.50 21.10V5.60A4.2 4.2 0 0 0 9.30 1.40H4.70" fill="none" stroke="#a3a3a3" stroke-width="2.8" stroke-linecap="butt" stroke-linejoin="round" /><path d="M0 12V-9.2M-5.7 -4.2L0 -9.3L5.7 -4.2" fill="none" stroke="#222" stroke-width="2.6" stroke-linecap="round" stroke-linejoin="round" /></g><g transform="translate(196.70000000000005 23.80000000000001)"><g transform="translate(8.6 8.4)"><rect x="-13.5" y="1.4" width="27.0" height="23.9" rx="4.2" fill="none" stroke="#3478f6" stroke-width="2.8"/></g><rect x="-14.9" y="0" width="29.8" height="26.7" rx="5.6" fill="#fff"/><path d="M-4.70 1.40H-9.30A4.2 4.2 0 0 0 -13.50 5.60V21.10A4.2 4.2 0 0 0 -9.30 25.30H9.30A4.2 4.2 0 0 0 13.50 21.10V5.60A4.2 4.2 0 0 0 9.30 1.40H4.70" fill="none" stroke="#3478f6" stroke-width="2.8" stroke-linecap="butt" stroke-linejoin="round" /><path d="M0 12V-9.2M-5.7 -4.2L0 -9.3L5.7 -4.2" fill="none" stroke="#222" stroke-width="2.6" stroke-linecap="round" stroke-linejoin="round" /></g><g transform="translate(275 23.80000000000001)"><g transform="translate(8.6 8.4)"><rect x="-13.5" y="1.4" width="27.0" height="23.9" rx="4.2" fill="none" stroke="#222" stroke-width="2.8"/></g><rect x="-14.9" y="0" width="29.8" height="26.7" rx="5.6" fill="#fff"/><path d="M-4.70 1.40H-9.30A4.2 4.2 0 0 0 -13.50 5.60V21.10A4.2 4.2 0 0 0 -9.30 25.30H9.30A4.2 4.2 0 0 0 13.50 21.10V5.60A4.2 4.2 0 0 0 9.30 1.40H4.70" fill="none" stroke="#222" stroke-width="2.8" stroke-linecap="butt" stroke-linejoin="round" /><path d="M0 12V-9.2M-5.7 -4.2L0 -9.3L5.7 -4.2" fill="none" stroke="#222" stroke-width="2.6" stroke-linecap="round" stroke-linejoin="round" /></g><circle cx="201.10000000000002" cy="75.9" r="4.1" fill="#3478f6"/></svg>
<div class="abs" style="left:626.0px;top:213.9px;font-size:12.5px;line-height:16px;color:#2b2a29;font-weight:bold;white-space:nowrap;">動畫</div>
<div class="abs" style="left:899.0px;top:214.5px;font-size:10.4px;line-height:14px;color:#8f8b89;font-weight:normal;white-space:nowrap;">自動</div>
<svg class="abs" style="left:932.0px;top:213.5px;" width="15" height="16" viewBox="0 0 15 16"><g fill="none" stroke="#2e2d2c" stroke-width="1.1" stroke-linejoin="round" stroke-linecap="round"><path d="M1.55 6.7A1.3 1.3 0 0 1 2.85 5.4H6.5L9.35 8.3V12.2A1.3 1.3 0 0 1 8.05 13.5H2.85A1.3 1.3 0 0 1 1.55 12.2Z"/><path d="M6.3 5.6V7.5A.9 .9 0 0 0 7.2 8.4H9.2"/><path d="M4.75 5.2V2.8A1.3 1.3 0 0 1 6.05 1.5H9.6L12.45 4.4V9.4A1.3 1.3 0 0 1 11.15 10.7H9.6"/><path d="M9.4 1.7V3.6A.9 .9 0 0 0 10.3 4.5H12.3"/></g></svg>
<div class="abs " style="left:625.5px;top:233.7px;width:189.5px;height:20.5px;border-radius:5.5px;background:#fff;box-shadow:0 0 0 .5px rgba(0,0,0,.13),0 1px 1.5px rgba(0,0,0,.17)"></div>
<div class="abs" style="left:634.2px;top:235.5px;font-size:13px;line-height:16px;color:#2b2a29;font-weight:normal;white-space:nowrap;">Bounce</div>
<div class="abs " style="left:796.7px;top:236.0px;width:16.0px;height:16.0px;border-radius:4.5px;background:linear-gradient(#4a8cf8,#2f74f3)"></div>
<svg class="abs" style="left:796.7px;top:236.0px;" width="16" height="16" viewBox="0 0 16 16"><path d="M5.4 6.1L8 3.6999999999999997L10.6 6.1M5.4 9.9L8 12.3L10.6 9.9" fill="none" stroke="#fff" stroke-width="1.5" stroke-linecap="round" stroke-linejoin="round"/></svg>
<div class="abs " style="left:822.7px;top:233.7px;width:84.6px;height:20.5px;border-radius:5.5px;background:#fff;box-shadow:0 0 0 .5px rgba(0,0,0,.13),0 1px 1.5px rgba(0,0,0,.17)"></div>
<svg class="abs" style="left:832.0px;top:237.0px;" width="13" height="13" viewBox="0 0 13 13"><path d="M1 1.2L10.8 6.5L1 11.8Z" fill="#2b2a29" stroke="#2b2a29" stroke-width=".8" stroke-linejoin="round"/></svg>
<div class="abs" style="left:851.4px;top:235.5px;font-size:13px;line-height:16px;color:#2b2a29;font-weight:normal;white-space:nowrap;letter-spacing:.25px">Preview</div>
<div class="abs " style="left:914.8px;top:233.7px;width:34.4px;height:20.5px;border-radius:5.5px;background:#fff;box-shadow:0 0 0 .5px rgba(0,0,0,.13),0 1px 1.5px rgba(0,0,0,.17)"></div>
<svg class="abs" style="left:924.0px;top:237.5px;" width="15" height="13" viewBox="0 0 15 13"><g fill="none" stroke="#8f8b89" stroke-width="1.45" stroke-linecap="round" stroke-linejoin="round"><path d="M1.85 5.8V4.6A2.2 2.2 0 0 1 4.05 2.4H9.6"/><path d="M14.4 5.8V7A2.2 2.2 0 0 1 12.2 9.2H6.4"/></g><path d="M9.2 .3L12.7 2.4L9.2 4.5ZM6.8 7.1L3.3 9.2L6.8 11.3Z" fill="#8f8b89" stroke="#8f8b89" stroke-width=".5" stroke-linejoin="round"/></svg>
<div class="abs" style="left:584.2px;top:277.1px;font-size:13px;line-height:16px;color:#2b2a29;font-weight:normal;white-space:nowrap;letter-spacing:.2px;width:100px;text-align:right;">Animate:</div>
<div class="abs" style="left:584.3px;top:322.8px;font-size:13px;line-height:16px;color:#2b2a29;font-weight:normal;white-space:nowrap;letter-spacing:.3px;width:100px;text-align:right;">Direction:</div>
<div class="abs " style="left:693.5px;top:277.8px;width:12.6px;height:12.6px;border-radius:50%;background:#fff;box-shadow:0 0 0 .5px rgba(0,0,0,.22),inset 0 .5px 1px rgba(0,0,0,.10)"></div>
<div class="abs" style="left:712.2px;top:277.2px;font-size:13px;line-height:16px;color:#2b2a29;font-weight:normal;white-space:nowrap;">完整符號</div>
<div class="abs " style="left:693.0px;top:297.3px;width:13.6px;height:13.6px;border-radius:50%;background:radial-gradient(circle,#fff 0 2.6px,#3478f6 3.3px)"></div>
<div class="abs" style="left:712.2px;top:297.2px;font-size:13px;line-height:16px;color:#2b2a29;font-weight:normal;white-space:nowrap;">依照層級</div>
<div class="abs " style="left:693.5px;top:323.8px;width:12.6px;height:12.6px;border-radius:50%;background:#fff;box-shadow:0 0 0 .5px rgba(0,0,0,.22),inset 0 .5px 1px rgba(0,0,0,.10)"></div>
<div class="abs" style="left:712.2px;top:323.2px;font-size:13px;line-height:16px;color:#2b2a29;font-weight:normal;white-space:nowrap;">向下</div>
<div class="abs " style="left:693.0px;top:343.2px;width:13.6px;height:13.6px;border-radius:50%;background:radial-gradient(circle,#fff 0 2.6px,#3478f6 3.3px)"></div>
<div class="abs" style="left:712.2px;top:343.1px;font-size:13px;line-height:16px;color:#2b2a29;font-weight:normal;white-space:nowrap;">向上</div>
  <div class="hl"></div>
</div>
</body>
</html>
